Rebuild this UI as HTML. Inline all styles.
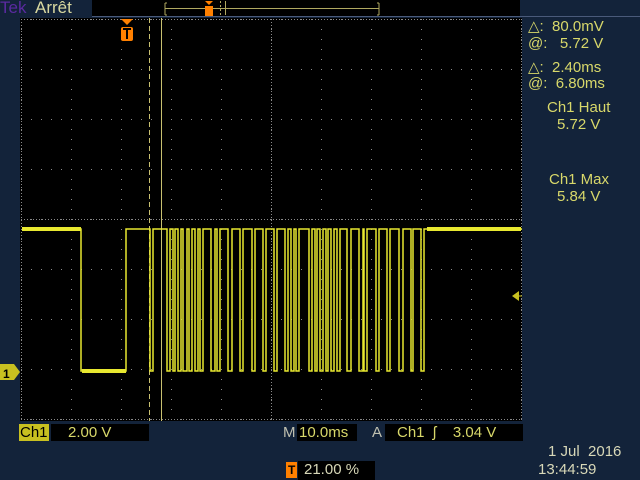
<!DOCTYPE html>
<html><head><style>
html,body{margin:0;padding:0;background:#13233a;width:640px;height:480px;overflow:hidden;font-family:"Liberation Sans",sans-serif;}
.t{position:absolute;white-space:pre;color:#d8d86a;font-size:15px;line-height:16px;}
.bx{position:absolute;background:#000;}
</style></head><body>
<svg width="640" height="480" style="position:absolute;left:0;top:0">
<defs>
<pattern id="gv" x="21" y="19" width="50" height="10" patternUnits="userSpaceOnUse"><rect x="0" y="0" width="1" height="1" fill="#8a8a8a"/></pattern>
<pattern id="gh" x="21" y="19" width="10" height="50" patternUnits="userSpaceOnUse"><rect x="0" y="0" width="1" height="1" fill="#8a8a8a"/></pattern>
</defs>
<rect x="92" y="0" width="428" height="16" fill="#000"/>
<line x1="92" y1="16.5" x2="640" y2="16.5" stroke="#4a5a7a"/>
<rect x="20" y="18" width="502" height="403" fill="#000"/>
<rect x="21" y="19" width="501" height="401" fill="url(#gv)"/>
<rect x="21" y="19" width="501" height="401" fill="url(#gh)"/>
<line x1="21" y1="19.5" x2="522" y2="19.5" stroke="#8a8a8a" stroke-dasharray="1 2"/>
<line x1="21" y1="419.5" x2="522" y2="419.5" stroke="#8a8a8a" stroke-dasharray="1 2"/>
<line x1="21.5" y1="19" x2="21.5" y2="420" stroke="#8a8a8a" stroke-dasharray="1 2"/>
<line x1="521.5" y1="19" x2="521.5" y2="420" stroke="#8a8a8a" stroke-dasharray="1 2"/>
<line x1="21" y1="219.5" x2="522" y2="219.5" stroke="#8a8a8a" stroke-dasharray="1 2"/>
<line x1="271.5" y1="19" x2="271.5" y2="420" stroke="#8a8a8a" stroke-dasharray="1 2"/>
<line x1="149.5" y1="18" x2="149.5" y2="421" stroke="#c8c070" stroke-dasharray="5 3"/>
<line x1="161.5" y1="18" x2="161.5" y2="421" stroke="#c8c070"/>
<polyline fill="none" stroke="#e8e830" stroke-width="1.5" points="22,229 81,229 81,371 126,371 126,229 150,229 150,371 153,371 153,229 167,229 167,371 170,371 170,229 173,229 173,371 175,371 175,229 178,229 178,371 181,371 181,229 183,229 183,371 187,371 187,229 189,229 189,371 192,371 192,229 195,229 195,371 198,371 198,229 200,229 200,371 203,371 203,229 211,229 211,371 215,371 215,229 217,229 217,371 220,371 220,229 228,229 228,371 232,371 232,229 240,229 240,371 243,371 243,229 252,229 252,371 255,371 255,229 263,229 263,371 266,371 266,229 274,229 274,371 277,371 277,229 285,229 285,371 288,371 288,229 291,229 291,371 294,371 294,229 296,229 296,371 299,371 299,229 309,229 309,371 312,371 312,229 315,229 315,371 317,371 317,229 320,229 320,371 323,371 323,229 326,229 326,371 328,371 328,229 331,229 331,371 334,371 334,229 337,229 337,371 340,371 340,229 347,229 347,371 351,371 351,229 359,229 359,371 363,371 363,229 364,229 364,371 367,371 367,229 376,229 376,371 379,371 379,229 387,229 387,371 390,371 390,229 399,229 399,371 403,371 403,229 411,229 411,371 413,371 413,229 421,229 421,371 424,371 424,229 522,229"/>
<rect x="22" y="227" width="59" height="4" fill="#e8e830"/>
<rect x="82" y="369" width="44" height="4" fill="#e8e830"/>
<rect x="427" y="227" width="94" height="4" fill="#e8e830"/>
<path d="M0,364 L14,364 L20,372 L14,380 L0,380Z" fill="#c8c020"/>
<text x="3" y="378" font-size="12" font-family="Liberation Sans" font-weight="bold" fill="#000">1</text>
<path d="M512,296 L519,291 L519,301Z" fill="#c8c020"/>
<line x1="517" y1="296" x2="522" y2="296" stroke="#c8c020"/>
<path d="M121,19 L133,19 L127,25Z" fill="#ff8000"/>
<rect x="121" y="27" width="12" height="14" rx="2" fill="#ff8000"/>
<path d="M123,29 h8 M127,29 v10" stroke="#000" stroke-width="2"/>
<path d="M165,3 v12 M165,3 h2 M165,15 h2 M379,3 v12 M379,3 h-2 M379,15 h-2" stroke="#b0a860"/>
<line x1="165" y1="8.5" x2="379" y2="8.5" stroke="#b0a860"/>
<line x1="220.5" y1="1" x2="220.5" y2="15" stroke="#b0a860" stroke-dasharray="2 2"/>
<line x1="225.5" y1="1" x2="225.5" y2="15" stroke="#b0a860"/>
<path d="M205,1 h8 l-4,4Z" fill="#ff8000"/>
<rect x="205" y="6" width="8" height="10" fill="#ff8000"/>
</svg>
<div class="t" style="left:0;top:-1px;color:#5a2aa0;font-size:17px;line-height:18px;">Tek</div>
<div class="t" style="left:35px;top:-1px;color:#d8d8a0;font-size:17px;line-height:18px;">Arrêt</div>
<div class="t" style="left:528px;top:19px;">△:  80.0mV</div>
<div class="t" style="left:528px;top:36px;">@:   5.72 V</div>
<div class="t" style="left:528px;top:60px;">△:  2.40ms</div>
<div class="t" style="left:528px;top:76px;">@:  6.80ms</div>
<div class="t" style="left:547px;top:100px;">Ch1 Haut</div>
<div class="t" style="left:557px;top:117px;">5.72 V</div>
<div class="t" style="left:549px;top:172px;">Ch1 Max</div>
<div class="t" style="left:557px;top:189px;">5.84 V</div>
<div style="position:absolute;left:19px;top:424px;width:30px;height:17px;background:#c8c020;"></div>
<div class="t" style="left:20px;top:425px;color:#000;">Ch1</div>
<div class="bx" style="left:51px;top:424px;width:98px;height:17px;"></div>
<div class="t" style="left:68px;top:425px;">2.00 V</div>
<div class="t" style="left:283px;top:425px;color:#c0c0b0;">M</div>
<div class="bx" style="left:297px;top:424px;width:60px;height:17px;"></div>
<div class="t" style="left:299px;top:425px;">10.0ms</div>
<div class="t" style="left:372px;top:425px;color:#c0c0b0;">A</div>
<div class="bx" style="left:385px;top:424px;width:138px;height:17px;"></div>
<div class="t" style="left:397px;top:425px;">Ch1  ʃ    3.04 V</div>
<div style="position:absolute;left:286px;top:462px;width:11px;height:16px;background:#ff8000;"></div>
<div class="t" style="left:288px;top:462px;color:#000;font-size:12px;font-weight:bold;">T</div>
<div class="bx" style="left:298px;top:461px;width:77px;height:19px;"></div>
<div class="t" style="left:304px;top:462px;color:#d8d8b8;">21.00 %</div>
<div class="t" style="left:548px;top:444px;color:#d8d8b8;">1 Jul  2016</div>
<div class="t" style="left:538px;top:462px;color:#d8d8b8;">13:44:59</div>
</body></html>
